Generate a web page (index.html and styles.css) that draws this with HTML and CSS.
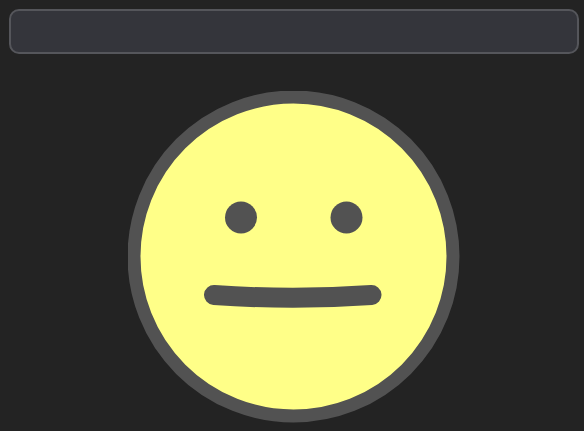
FILE: index.html
```html
<!DOCTYPE html>
<html lang="en">
<head>
  <meta charset="UTF-8" />
  <meta name="viewport" content="width=device-width, initial-scale=1.0"/>
  <title>Mood</title>
  <link rel="stylesheet" href="styles.css">
</head>
<body>
  <div class="top-bar"></div>
  <div class="face-wrap">
    <svg class="face" viewBox="0 0 332 332" width="332" height="332" role="img" aria-label="Neutral face">
      <circle cx="165.5" cy="165.5" r="159.5" fill="#ffff88" stroke="#525252" stroke-width="13" />
      <circle cx="113" cy="126.5" r="16" fill="#525252" />
      <circle cx="218.5" cy="126.5" r="16" fill="#525252" />
      <path d="M86 204 Q165 209.5 243.5 204" fill="none" stroke="#525252" stroke-width="20" stroke-linecap="round" />
    </svg>
  </div>
</body>
</html>
```

FILE: styles.css
```css
body {
  margin: 0;
  height: 431px;
  overflow: hidden;
  background-color: #232323;
  font-family: "Liberation Sans", Arial, sans-serif;
}

.top-bar {
  box-sizing: border-box;
  height: 45px;
  margin: 9px 5px 0 9px;
  background-color: #34353b;
  border: 2px solid #55565b;
  border-radius: 10px;
}

.face-wrap {
  display: flex;
  justify-content: center;
  margin-top: 37px;
  padding-left: 4px;
}

.face {
  display: block;
}
```
